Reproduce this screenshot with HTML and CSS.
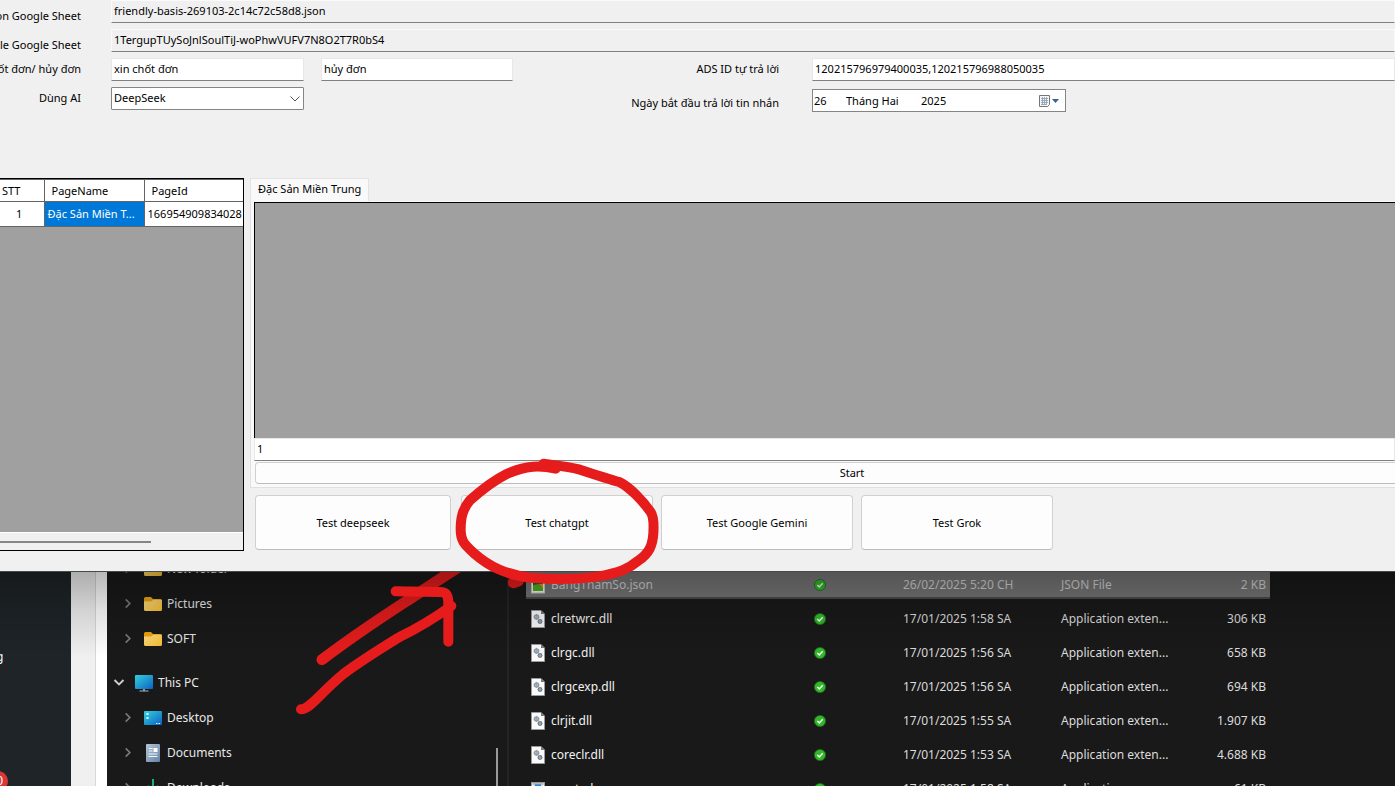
FILE: index.html
```html
<!DOCTYPE html>
<html lang="vi">
<head>
<meta charset="utf-8">
<title>Test AI</title>
<link rel="stylesheet" href="styles.css">
</head>
<body>
<svg class="defs" aria-hidden="true">
  <defs>
    <linearGradient id="gFolder" x1="0" y1="0" x2="1" y2="1"><stop offset="0" stop-color="#ffe08a"/><stop offset="1" stop-color="#f9bd2c"/></linearGradient>
    <linearGradient id="gBlue" x1="0" y1="0" x2="1" y2="1"><stop offset="0" stop-color="#35cfdd"/><stop offset="1" stop-color="#0b63c4"/></linearGradient>
    <linearGradient id="gDoc" x1="0" y1="0" x2="1" y2="1"><stop offset="0" stop-color="#b4c6d8"/><stop offset="1" stop-color="#6583a6"/></linearGradient>
    <symbol id="folder" viewBox="0 0 18 16"><path d="M0 2.500Q0 1 1.500 1H7L9 3H16.500Q18 3 18 4.500V8H0Z" fill="#eba50c"/><path d="M0 5.500H7L9.500 3.800H17Q18 3.800 18 5V13.500Q18 15 16.500 15H1.500Q0 15 0 13.500Z" fill="url(#gFolder)"/></symbol>
    <symbol id="pc" viewBox="0 0 18 18"><rect x="0" y="1" width="18" height="14" rx="1" fill="url(#gBlue)"/><path d="M8.200 15H9.800V16.500H13.500V17.500H4.500V16.500H8.200Z" fill="#a8b4bd"/></symbol>
    <symbol id="desktop" viewBox="0 0 18 14"><rect width="18" height="14" rx="1" fill="url(#gBlue)"/><path d="M2.500 2h2v2h-2zM2.500 6h2v2h-2zM12 12h1.500v1H12zM14.500 12H16v1h-1.500z" fill="#e8ffff"/></symbol>
    <symbol id="doc" viewBox="0 0 14 18"><rect width="14" height="18" rx="1" fill="url(#gDoc)"/><path d="M3 4.500h3.500M3 7h3.500M2.500 10h9M2.500 12.500h9" stroke="#f3f7fb" stroke-width="1.200"/><rect x="7.500" y="4" width="4" height="4" fill="#fff"/></symbol>
    <symbol id="down" viewBox="0 0 14 18"><path d="M7 0V11M2 7L7 12L12 7M1 16H13" fill="none" stroke="#1fae7b" stroke-width="2"/></symbol>
    <symbol id="right" viewBox="0 0 8 12"><path d="M1.500 1.500L6 6L1.500 10.500" fill="none" stroke="#7b7b7b" stroke-width="1.800"/></symbol>
    <symbol id="open" viewBox="0 0 12 8"><path d="M1.500 1.500L6 6L10.500 1.500" fill="none" stroke="#cfcfcf" stroke-width="1.800"/></symbol>
    <symbol id="dll" viewBox="0 0 14 18"><path d="M.5 .5H10L13.500 4V17.500H.5Z" fill="#fafafa" stroke="#9a9a9a"/><path d="M10 .5V4H13.500Z" fill="#777"/><circle cx="5.500" cy="7" r="2" fill="#dfe5ea" stroke="#8c99a5" stroke-width="1.500"/><circle cx="9" cy="11.500" r="1.700" fill="#e8edf1" stroke="#6c7984" stroke-width="1.500"/><path d="M5.500 3.800V10M2.500 7H8.500M9 9V14M6.500 11.500H11.500" stroke="#8c99a5" stroke-width=".7"/></symbol>
    <symbol id="json" viewBox="0 0 14 18"><rect x=".5" y="1" width="13" height="16" fill="#f4f4f4" stroke="#c9c9c9"/><rect x="2" y="3" width="10" height="12" fill="#1b5e2a"/><path d="M2 15V9L8 8L12 11V15Z" fill="#4fae1c"/><path d="M8 8H12V12Z" fill="#f18a22"/></symbol>
    <symbol id="exe" viewBox="0 0 18 18"><rect x=".5" y=".5" width="17" height="17" fill="#e8e8e8" stroke="#999"/><path d="M2 2.500H16" stroke="#777"/><rect x="5" y="3" width="8" height="10" fill="#2784d8"/></symbol>
    <symbol id="ok" viewBox="0 0 12 12"><circle cx="6" cy="6" r="5.600" fill="#35b62c" stroke="#196e17" stroke-width=".8"/><path d="M3.300 6L5.300 7.900L8.700 4.300" fill="none" stroke="#eaffea" stroke-width="1.500"/></symbol>
  </defs>
</svg>

<main class="app">
  <form class="settings">
    <label class="caption low" for="cred">on Google Sheet</label>
    <input class="box read wide" id="cred" value="friendly-basis-269103-2c14c72c58d8.json" readonly>
    <label class="caption low" for="sheet">le Google Sheet</label>
    <input class="box read wide" id="sheet" value="1TergupTUySoJnlSoulTiJ-woPhwVUFV7N8O2T7R0bS4" readonly>
    <label class="caption" for="confirm">ốt đơn/ hủy đơn</label>
    <input class="box c2" id="confirm" value="xin chốt đơn">
    <input class="box c3" aria-label="hủy đơn" value="hủy đơn">
    <label class="caption c4" for="ads">ADS ID tự trả lời</label>
    <input class="box c5" id="ads" value="120215796979400035,120215796988050035">
    <label class="caption" for="ai">Dùng AI</label>
    <div class="combo c2">
      <select id="ai"><option>DeepSeek</option></select>
      <svg class="combo-arrow" viewBox="0 0 10 6"><path d="M.5 .5L5 5L9.500 .5" fill="none" stroke="#555"/></svg>
    </div>
    <label class="caption date-label c4" for="day">Ngày bắt đầu trả lời tin nhắn</label>
    <div class="date c5">
      <input class="day" id="day" value="26">
      <input class="month" aria-label="Tháng" value="Tháng Hai">
      <input class="year" aria-label="Năm" value="2025">
      <button type="button" aria-label="Lịch">
        <svg width="22" height="14" viewBox="0 0 22 14"><path d="M1.500 1.500H11.500V10.500L9.500 12.500H1.500Z" fill="#f5f6f8" stroke="#77747a"/><path d="M3 4.500H10M3 6.500H10M3 8.500H10M3 10.500H8M4.500 3V11M6.500 3V11M8.500 3V11" stroke="#8b99ad" stroke-width=".8"/><path d="M14 5H21L17.500 9Z" fill="#3b5f8f"/></svg>
      </button>
    </div>
  </form>

  <div class="work">
    <section class="pages">
      <table class="page-table">
        <thead><tr><th class="stt">STT</th><th class="pname">PageName</th><th>PageId</th></tr></thead>
        <tbody><tr><td class="num">1</td><td class="picked">Đặc Sản Miền T...</td><td>166954909834028</td></tr></tbody>
      </table>
      <div class="hscroll"><div class="thumb"></div></div>
    </section>
    <section class="detail">
      <button class="tab" type="button">Đặc Sản Miền Trung</button>
      <div class="panel">
        <div class="canvas"></div>
        <input class="box count" aria-label="Số lượng" value="1">
        <div class="start-row"><button class="btn start" type="button">Start</button></div>
      </div>
      <div class="tests">
        <button class="btn test first" type="button">Test deepseek</button>
        <button class="btn test" type="button">Test chatgpt</button>
        <button class="btn test" type="button">Test Google Gemini</button>
        <button class="btn test" type="button">Test Grok</button>
      </div>
    </section>
  </div>
</main>

<div class="behind">
  <aside class="chat"><span class="chat-text">g</span><span class="badge">0</span></aside>
  <div class="gutter"></div>
  <div class="edge"></div>
  <nav class="tree">
    <a href="#"><svg class="chev"><use href="#right"/></svg><svg class="ico"><use href="#folder"/></svg>New folder</a>
    <a href="#"><svg class="chev"><use href="#right"/></svg><svg class="ico"><use href="#folder"/></svg>Pictures</a>
    <a href="#"><svg class="chev"><use href="#right"/></svg><svg class="ico"><use href="#folder"/></svg>SOFT</a>
    <a class="root" href="#"><svg class="chev"><use href="#open"/></svg><svg class="ico"><use href="#pc"/></svg>This PC</a>
    <a href="#"><svg class="chev"><use href="#right"/></svg><svg class="ico"><use href="#desktop"/></svg>Desktop</a>
    <a href="#"><svg class="chev"><use href="#right"/></svg><svg class="ico"><use href="#doc"/></svg>Documents</a>
    <a href="#"><svg class="chev"><use href="#right"/></svg><svg class="ico"><use href="#down"/></svg>Downloads</a>
    <span class="tree-thumb"></span>
  </nav>
  <section class="files">
    <table class="file-table">
      <colgroup><col class="w-name"><col class="w-ok"><col class="w-date"><col class="w-type"><col class="w-size"></colgroup>
      <tbody>
      <tr class="sel"><td><svg class="fico"><use href="#json"/></svg>BangThamSo.json</td><td class="ok"><svg><use href="#ok"/></svg></td><td class="when">26/02/2025 5:20 CH</td><td class="type">JSON File</td><td class="size">2 KB</td></tr>
      <tr><td><svg class="fico"><use href="#dll"/></svg>clretwrc.dll</td><td class="ok"><svg><use href="#ok"/></svg></td><td class="when">17/01/2025 1:58 SA</td><td class="type">Application exten...</td><td class="size">306 KB</td></tr>
      <tr><td><svg class="fico"><use href="#dll"/></svg>clrgc.dll</td><td class="ok"><svg><use href="#ok"/></svg></td><td class="when">17/01/2025 1:56 SA</td><td class="type">Application exten...</td><td class="size">658 KB</td></tr>
      <tr><td><svg class="fico"><use href="#dll"/></svg>clrgcexp.dll</td><td class="ok"><svg><use href="#ok"/></svg></td><td class="when">17/01/2025 1:56 SA</td><td class="type">Application exten...</td><td class="size">694 KB</td></tr>
      <tr><td><svg class="fico"><use href="#dll"/></svg>clrjit.dll</td><td class="ok"><svg><use href="#ok"/></svg></td><td class="when">17/01/2025 1:55 SA</td><td class="type">Application exten...</td><td class="size">1.907 KB</td></tr>
      <tr><td><svg class="fico"><use href="#dll"/></svg>coreclr.dll</td><td class="ok"><svg><use href="#ok"/></svg></td><td class="when">17/01/2025 1:53 SA</td><td class="type">Application exten...</td><td class="size">4.688 KB</td></tr>
      <tr><td><svg class="fico"><use href="#exe"/></svg>createdump.exe</td><td class="ok"><svg><use href="#ok"/></svg></td><td class="when">17/01/2025 1:58 SA</td><td class="type">Application</td><td class="size">61 KB</td></tr>
      </tbody>
    </table>
  </section>
  <svg class="mark-under" viewBox="150 423 1125 447" aria-hidden="true"><path d="M246 686C330 622 420 562 500 510C550 477 590 450 650 412M820 455L835 450" fill="none" stroke="#e61c1c" stroke-width="33" stroke-linecap="round" stroke-linejoin="round"/></svg>
  <div class="shade"></div>
</div>
<svg class="mark" viewBox="150 75 1125 795" aria-hidden="true">
  <g fill="none" stroke="#e61c1c" stroke-width="30" stroke-linecap="round" stroke-linejoin="round">
    <path d="M947 116C900 106 860 106 800 132C760 152 720 184 690 211C668 237 662 262 662 298C662 332 672 342 700 368C750 412 800 434 870 443C950 449 1010 449 1070 440C1140 428 1168 415 1195 392C1228 370 1238 345 1240 310C1241 290 1243 262 1232 246C1208 212 1170 172 1138 156C1110 148 1060 132 1020 119C985 110 950 106 911 101L947 116"/>
    <path d="M183 838C210 838 240 790 310 732C360 694 430 651 480 620C535 594 585 563 634 528"/>
    <path d="M467 484C520 485 570 485 610 487Q625 490 625 520V635"/>
  </g>
</svg>
</body>
</html>
```
FILE: styles.css
```css
* { box-sizing: border-box; }
body {
  margin: 0;
  height: 100vh;
  display: flex;
  flex-direction: column;
  position: relative;
  overflow: hidden;
  background: #191919;
  font: 11px/16px "Noto Sans", "Open Sans", sans-serif;
  color: #000;
}
input, select, button { font: inherit; color: inherit; margin: 0; }
.defs { position: absolute; width: 0; height: 0; }

.app { background: #f0f0f0; padding: 0 0 20px; border-bottom: 1px solid #454a4a; }
.settings {
  display: grid;
  grid-template-columns: 81px 30px 193px 17px 192px 1fr 33px 583px;
  grid-auto-rows: 23px;
  row-gap: 6px;
}
.caption { grid-column: 1; display: flex; justify-content: flex-end; align-items: center; padding-bottom: 1px; white-space: nowrap; }
.low { padding: 8px 0 0; }
.box {
  height: 23px;
  min-width: 0;
  padding: 0 2px 2px;
  border: 1px solid #e8e8e8;
  border-bottom-color: #808080;
  background: #fff;
}
.read { background: #f0f0f0; border-color: #fafafa; border-bottom-color: #808080; }
.wide { grid-column: 3 / -1; }
.c2 { grid-column: 3; }
.c3 { grid-column: 5; }
.caption.c4 { grid-column: 6; }
.c5 { grid-column: 8; }
.combo { position: relative; height: 23px; }
.combo select {
  appearance: none;
  width: 100%;
  height: 100%;
  padding: 0 2px 2px;
  border: 1px solid #858585;
  border-radius: 1px;
  background: #fff;
}
.combo-arrow { position: absolute; right: 4px; top: 9px; width: 10px; height: 6px; }
.date-label { padding: 8px 0 0; }
.date {
  display: flex;
  align-items: center;
  width: 254px;
  height: 23px;
  margin-top: 2px;
  border: 1px solid #858585;
  background: #fff;
}
.date input { border: 0; padding: 0 0 1px 1px; background: none; height: 20px; min-width: 0; }
.date .day { width: 32px; }
.date .month { width: 75px; }
.date .year { flex: 1; }
.date button { border: 0; padding: 0 5px 0 4px; background: none; display: flex; }

.work { display: flex; gap: 6px; margin-top: 68px; }
.pages {
  width: 244px;
  height: 373px;
  display: flex;
  flex-direction: column;
  justify-content: space-between;
  background: #a0a0a0;
  border: 1px solid #000;
  border-width: 1px 1px 1px 0;
}
.page-table { width: 100%; table-layout: fixed; border-collapse: collapse; background: #fff; }
.page-table th, .page-table td { border: 1px solid #646464; border-left: 0; padding: 0 3px; font-weight: 400; text-align: left; white-space: nowrap; overflow: hidden; }
.page-table th { height: 22px; padding-left: 7px; }
.page-table td { height: 25px; }
.page-table th:last-child, .page-table td:last-child { border-right: 0; padding-right: 0; }
.page-table .stt { width: 44px; padding-left: 2px; }
.page-table .pname { width: 100px; }
.page-table .num { text-align: center; padding: 0 8px 0 3px; }
.page-table .picked { background: #0078d7; color: #fff; }
.hscroll { height: 18px; padding-top: 8px; border-top: 1px solid #fff; background: #f0f0f0; }
.thumb { width: 151px; height: 2px; background: #868686; }

.detail { flex: 1; min-width: 0; }
.tab { display: block; height: 23px; padding: 0 7px 2px; border: 1px solid #e3e3e3; border-bottom: 0; background: #f9f9f9; }
.panel { padding: 1px 0 3px 3px; border: 1px solid #e0e0e0; border-width: 0 0 1px 1px; background: #f9f9f9; }
.canvas { height: 236px; background: #a0a0a0; border: 1px solid #000; border-width: 1px 0 0 1px; }
.count { display: block; width: 100%; }
.btn { border: 1px solid #d0d0d0; border-bottom-color: #bcbcbc; border-radius: 4px; background: #fdfdfd; padding: 0; }
.start-row { display: flex; padding: 1px 0 0 1px; }
.start { flex: 1; height: 22px; border-right: 0; border-radius: 4px 0 0 4px; padding-left: 53px; }
.tests { display: flex; gap: 8px; padding: 7px 0 0 5px; }
.test { width: 192px; height: 55px; }
.test.first { width: 196px; margin-right: 2px; }

.behind { flex: 1; min-height: 0; display: flex; position: relative; overflow: hidden; font-size: 12px; color: #fff; }
.chat { width: 71px; background: #1e2428; position: relative; }
.chat-text { position: absolute; left: -4px; top: 77px; }
.badge { position: absolute; left: -12px; top: 199px; width: 20px; height: 20px; border-radius: 50%; background: #d93636; text-align: right; padding-right: 5px; line-height: 20px; }
.gutter { width: 25px; background: #f0f0f0; border-right: 1px solid #d8d8d8; }
.edge { width: 11px; background: #fff; }
.tree { width: 402px; margin-top: -21px; border-right: 2px solid #242424; position: relative; color: #e8e8e8; }
.tree a { height: 35px; display: flex; align-items: center; padding-left: 15px; color: inherit; text-decoration: none; }
.tree .chev { width: 12px; height: 11px; margin-right: 10px; }
.tree .ico { width: 18px; height: 18px; margin-right: 5px; }
.tree .root { margin-top: 9px; padding-left: 6px; }
.tree-thumb { position: absolute; right: 9px; top: 197px; bottom: 0; width: 2px; background: #9a9a9a; }
.files { flex: 1; min-width: 0; margin-top: -4px; padding-left: 17px; }
.file-table { width: 744px; table-layout: fixed; border-collapse: collapse; color: #dcdcdc; }
.w-name { width: 270px; }
.w-ok { width: 48px; }
.w-date { width: 212px; }
.w-type { width: 126px; }
.w-size { width: 88px; }
.file-table td { height: 34px; padding: 0; white-space: nowrap; }
.file-table td:first-child { padding-left: 5px; color: #f2f2f2; }
.file-table .sel { background: linear-gradient(#767676 29px, #4b4b4b 29px, #4b4b4b 31px, transparent 31px); }
.file-table .sel td, .file-table .sel td:first-child { color: #d0d0d0; }
.fico { width: 14px; height: 18px; margin-right: 6px; vertical-align: -5px; }
.ok svg { display: block; width: 12px; height: 12px; margin: 0 auto; }
.file-table .when { padding-left: 59px; }
.file-table .type { padding-left: 5px; }
.file-table .size { text-align: right; padding-right: 4px; }

.shade { position: absolute; inset: 0 0 auto; height: 85px; background: linear-gradient(rgba(0, 0, 0, .28), rgba(0, 0, 0, .12) 45%, rgba(0, 0, 0, 0)); pointer-events: none; }
.mark-under { position: absolute; left: 290px; top: 0; width: 375px; height: 149px; }
.mark { position: absolute; left: 290px; top: 455px; width: 375px; height: 265px; pointer-events: none; }
```
